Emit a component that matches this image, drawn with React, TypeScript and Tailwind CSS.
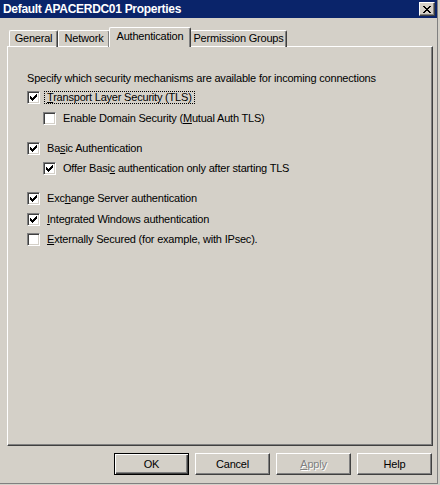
import React from "react";

const font = "font-['Liberation_Sans',Arial,sans-serif]";

type Row = { label: React.ReactNode; checked: boolean; indent?: boolean; gap: string; focus?: boolean };

function U({ children }: { children: React.ReactNode }) {
  return <span className="underline underline-offset-[1px]">{children}</span>;
}

function CheckBox({ checked }: { checked: boolean }) {
  return (
    <div className="w-[13px] h-[13px] shrink-0 bg-white border border-t-[#808080] border-l-[#808080] border-r-white border-b-white shadow-[inset_1px_1px_#404040,inset_-1px_-1px_#D4D0C8] flex items-center justify-center">
      {checked && (
        <svg width="7" height="7" viewBox="0 0 7 7" shapeRendering="crispEdges">
          <path
            d="M0 2h1v3h-1zM1 3h1v3h-1zM2 4h1v3h-1zM3 3h1v3h-1zM4 2h1v3h-1zM5 1h1v3h-1zM6 0h1v3h-1z"
            fill="#000"
          />
        </svg>
      )}
    </div>
  );
}

const rows: Row[] = [
  { label: <><U>T</U>ransport Layer Security (TLS)</>, checked: true, gap: "mt-[6px]", focus: true },
  { label: <>Enable Domain Security (<U>M</U>utual Auth TLS)</>, checked: false, indent: true, gap: "mt-[8px]" },
  { label: <>Ba<U>s</U>ic Authentication</>, checked: true, gap: "mt-[17px]" },
  { label: <>Offer Basi<U>c</U> authentication only after starting TLS</>, checked: true, indent: true, gap: "mt-[7px]" },
  { label: <>Exc<U>h</U>ange Server authentication</>, checked: true, gap: "mt-[17px]" },
  { label: <><U>I</U>ntegrated Windows authentication</>, checked: true, gap: "mt-[8px]" },
  { label: <><U>E</U>xternally Secured (for example, with IPsec).</>, checked: false, gap: "mt-[7px]" },
];

const tabs = [
  { name: "General", w: "w-[49px]" },
  { name: "Network", w: "w-[52px]" },
  { name: "Authentication", w: "w-[82px]" },
  { name: "Permission Groups", w: "w-[97px]" },
];

function Button({ label, primary, disabled }: { label: React.ReactNode; primary?: boolean; disabled?: boolean }) {
  const edge = primary
    ? "border border-black shadow-[inset_1px_1px_#fff,inset_-1px_-1px_#404040,inset_-2px_-2px_#808080]"
    : "border border-t-white border-l-white border-r-[#404040] border-b-[#404040] shadow-[inset_-1px_-1px_#808080]";
  return (
    <div
      className={`w-[75px] h-[22px] flex items-center justify-center text-[11px] ${edge} ${
        disabled ? "text-[#808080] [text-shadow:1px_1px_#fff]" : "text-black"
      }`}
    >
      {label}
    </div>
  );
}

export default function App() {
  return (
    <div className={`w-[440px] h-[485px] bg-[#D4D0C8] overflow-hidden tracking-[-0.2px] ${font}`}>
      <div className="w-[438px] h-[484px] border-r border-b border-r-[#808080] border-b-[#808080] flex flex-col">
        <div className="h-[18px] bg-[#0A246A] flex items-center justify-between pl-[3px] pr-[2px]">
          <span className="text-white font-bold text-[12px] leading-none tracking-[-0.3px]">Default APACERDC01 Properties</span>
          <div className="w-[16px] h-[14px] bg-[#D4D0C8] border border-t-white border-l-white border-r-[#404040] border-b-[#404040] shadow-[inset_-1px_-1px_#808080] flex items-center justify-center">
            <svg width="8" height="7" viewBox="0 0 8 7" shapeRendering="crispEdges">
              <path d="M0 0h2v1h-2zM6 0h2v1h-2zM1 1h2v1h-2zM5 1h2v1h-2zM2 2h4v1h-4zM3 3h2v1h-2zM2 4h4v1h-4zM1 5h2v1h-2zM5 5h2v1h-2zM0 6h2v1h-2zM6 6h2v1h-2z" fill="#000" />
            </svg>
          </div>
        </div>

        <div className="mt-[9px] ml-[9px] flex items-end h-[20px] relative z-10">
          {tabs.map((t) => {
            const active = t.name === "Authentication";
            return (
              <div
                key={t.name}
                className={`${t.w} flex items-center justify-center whitespace-nowrap text-[11px] text-black border-t border-l border-r border-t-white border-l-white border-r-[#404040] shadow-[inset_-1px_0_#808080] rounded-t-[2px] ${
                  active ? "h-[20px] bg-[#D4D0C8] -mx-[1px] relative z-10 pb-[3px]" : "h-[17px] pb-[1px]"
                }`}
              >
                {t.name}
              </div>
            );
          })}
        </div>

        <div className="ml-[7px] -mt-[1px] w-[426px] h-[400px] border border-t-white border-l-white border-r-[#404040] border-b-[#404040] shadow-[inset_-1px_-1px_#808080] pl-[19px] pt-[25px] text-[11px] text-black">
          <div className="leading-[13px]">Specify which security mechanisms are available for incoming connections</div>
          {rows.map((r, i) => (
            <div key={i} className={`${r.gap} ${r.indent ? "ml-[16px]" : ""} flex items-center h-[13px]`}>
              <CheckBox checked={r.checked} />
              <span
                className={`ml-[4px] px-[3px] leading-[13px] whitespace-nowrap ${
                  r.focus ? "outline outline-1 outline-dotted outline-black -outline-offset-1" : ""
                }`}
              >
                {r.label}
              </span>
            </div>
          ))}
        </div>

        <div className="mt-[7px] ml-[114px] flex gap-[6px]">
          <Button label="OK" primary />
          <Button label="Cancel" />
          <Button label={<><U>A</U>pply</>} disabled />
          <Button label="Help" />
        </div>
      </div>
    </div>
  );
}
